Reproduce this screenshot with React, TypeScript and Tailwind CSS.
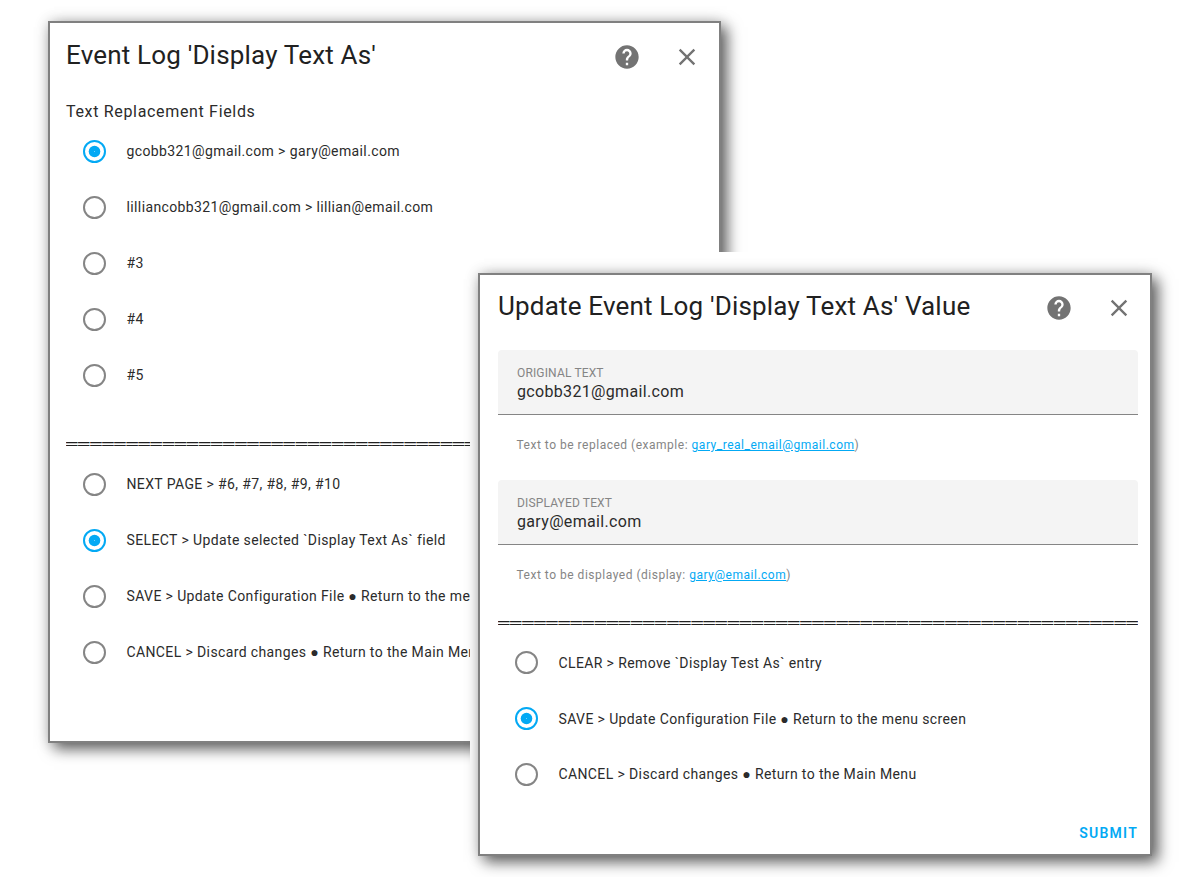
import type { ReactNode } from "react";

function HelpIcon() {
  return (
    <svg viewBox="0 0 24 24" className="size-7 fill-[#737373]">
      <path d="M15.07,11.25L14.17,12.17C13.45,12.89 13,13.5 13,15H11V14.5C11,13.39 11.45,12.39 12.17,11.67L13.41,10.41C13.78,10.05 14,9.55 14,9C14,7.89 13.1,7 12,7A2,2 0 0,0 10,9H8A4,4 0 0,1 12,5A4,4 0 0,1 16,9C16,9.88 15.64,10.67 15.07,11.25M13,19H11V17H13M12,2A10,10 0 0,0 2,12A10,10 0 0,0 12,22A10,10 0 0,0 22,12C22,6.47 17.5,2 12,2Z" />
    </svg>
  );
}

function CloseIcon() {
  return (
    <svg viewBox="0 0 24 24" className="size-7 fill-[#737373]">
      <path d="M19,6.41L17.59,5L12,10.59L6.41,5L5,6.41L10.59,12L5,17.59L6.41,19L12,13.41L17.59,19L19,17.59L13.41,12L19,6.41Z" />
    </svg>
  );
}

function Radio({ label, checked = false, labelClass = "" }: { label: string; checked?: boolean; labelClass?: string }) {
  return (
    <div className="flex h-14 items-center whitespace-nowrap pl-[17px]">
      <svg viewBox="0 0 23 23" className="mr-[20.5px] size-[23px] shrink-0" fill="none">
        <circle cx="11.5" cy="11.5" r="10.5" strokeWidth="2" className={checked ? "stroke-[#03a9f4]" : "stroke-[#858585]"} />
        {checked && <circle cx="11.5" cy="11.5" r="5.8" className="fill-[#03a9f4]" />}
        {checked && <circle cx="11.5" cy="11.5" r="0.4" className="fill-white" />}
      </svg>
      <span className={`text-[14px] tracking-[0.38px] text-[#2b2b2b] ${labelClass}`}>{label}</span>
    </div>
  );
}

function Separator() {
  return (
    <div className="h-6 overflow-hidden whitespace-nowrap pt-px font-['Liberation_Sans'] text-[16px] leading-6 tracking-[0.75px]">
      {"═".repeat(53)}
    </div>
  );
}

function Header({ title, className }: { title: string; className: string }) {
  return (
    <div className={`flex items-center ${className}`}>
      <h2 className="grow whitespace-nowrap text-[26px] leading-8 tracking-[0.18px]">{title}</h2>
      <div className="mt-1 flex gap-8">
        <HelpIcon />
        <CloseIcon />
      </div>
    </div>
  );
}

function Field({ label, value, help, link }: { label: string; value: string; help: string; link: string }) {
  return (
    <div className="h-[130px]">
      <div className="h-[65px] rounded-t border-b border-[#858585] bg-[#f4f4f4] pl-[19px] pt-3.5">
        <div className="text-[12px] leading-[18px] tracking-[0.15px] text-[#858585]">{label}</div>
        <div className="text-[16px] leading-5 tracking-[0.33px] text-[#2b2b2b]">{value}</div>
      </div>
      <p className="pl-[18.5px] pt-[21px] text-[12px] leading-[18px] tracking-[0.51px] text-[#858585]">
        {help} <a className="text-[#03a9f4] underline">{link}</a>)
      </p>
    </div>
  );
}

function Dialog({ className, children }: { className: string; children: ReactNode }) {
  return (
    <section className={`border-2 border-[#808080] bg-white text-[#212121] shadow-[6px_6px_14px_rgba(0,0,0,0.6),0_0_14px_rgba(0,0,0,0.16)] ${className}`}>
      {children}
    </section>
  );
}

export default function App() {
  return (
    <main className="relative h-[877px] w-[1200px] overflow-hidden bg-white font-[Roboto,sans-serif]">
      <Dialog className="absolute left-12 top-[21px] h-[722px] w-[673px] pl-4">
        <Header title="Event Log 'Display Text As'" className="h-16 pr-[18px]" />
        <p className="mt-[13px] h-[23px] text-[16px] leading-6 tracking-[0.67px] text-[#2b2b2b]">Text Replacement Fields</p>
        <Radio label="gcobb321@gmail.com > gary@email.com" checked />
        <Radio label="lilliancobb321@gmail.com > lillian@email.com" />
        <Radio label="#3" />
        <Radio label="#4" />
        <Radio label="#5" />
        <div className="pb-[1px] pt-7">
          <Separator />
        </div>
        <Radio label="NEXT PAGE > #6, #7, #8, #9, #10" />
        <Radio label="SELECT > Update selected `Display Text As` field" checked />
        <Radio label="SAVE > Update Configuration File ● Return to the menu screen" />
        <Radio label="CANCEL > Discard changes ● Return to the Main Menu" />
      </Dialog>

      <div className="absolute left-[470px] top-[252px] h-[625px] w-[730px] bg-white pl-2 pt-[21px]">
        <Dialog className="h-[583px] w-[674px] pl-[18px] pr-3">
          <Header title="Update Event Log 'Display Text As' Value" className="h-[62px] pr-[5px]" />
          <div className="pt-[13px]">
            <Field label="ORIGINAL TEXT" value="gcobb321@gmail.com" help="Text to be replaced (example:" link="gary_real_email@gmail.com" />
            <Field label="DISPLAYED TEXT" value="gary@email.com" help="Text to be displayed (display:" link="gary@email.com" />
          </div>
          <Separator />
          <Radio label="CLEAR > Remove `Display Test As` entry" labelClass="pt-0.5" />
          <Radio label="SAVE > Update Configuration File ● Return to the menu screen" checked labelClass="pt-0.5" />
          <Radio label="CANCEL > Discard changes ● Return to the Main Menu" />
          <div className="flex justify-end pt-[21px]">
            <button className="text-[14px] font-semibold tracking-[1.25px] text-[#03a9f4]">SUBMIT</button>
          </div>
        </Dialog>
      </div>
    </main>
  );
}
